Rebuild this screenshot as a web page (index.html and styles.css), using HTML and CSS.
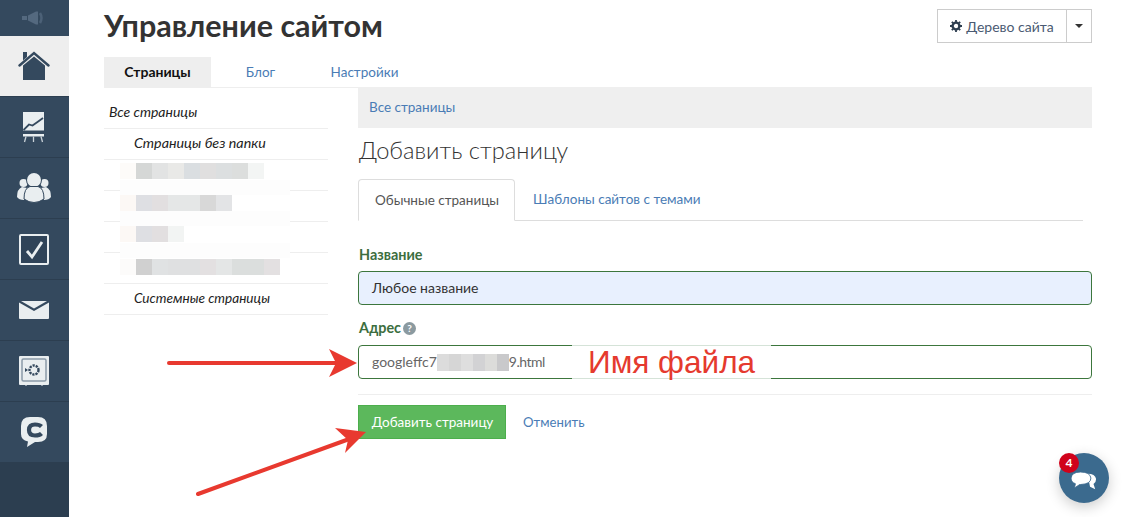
FILE: index.html
```html
<!DOCTYPE html>
<html lang="ru">
<head>
<meta charset="utf-8">
<title>Управление сайтом</title>
<link rel="stylesheet" href="styles.css">
</head>
<body>
<nav class="side">
  <div class="side-top">
    <svg width="26" height="14" viewBox="0 0 26 14"><path d="M1 5h5v4H1zM7 4.500L15 .5h2v13h-2L7 9.500z" fill="#54697f"/><path d="M19 2q3 5 0 10" stroke="#4c6177" stroke-width="2.500" fill="none"/></svg>
  </div>
  <a class="side-item active">
    <svg width="32" height="30" viewBox="0 0 32 30"><path d="M5 1h4v5l-4 3.500z" fill="#34495e"/><path d="M5 14.500 16 5.500l11 9V29H5z" fill="#34495e"/><path d="M1.500 14.500 16 2l14.500 12.500" fill="none" stroke="#34495e" stroke-width="2.400" stroke-linecap="round"/></svg>
  </a>
  <a class="side-item">
    <svg width="22" height="31" viewBox="0 0 22 31"><path d="M0 0h21v18.500H0z" fill="#e9eef0"/><path d="M.5 18 6 12.500l3.500 1 5-3.500 5.500-4" fill="none" stroke="#34495e" stroke-width="1.800"/><path d="M0 22h21v2.500H0z" fill="#e9eef0"/><path d="M3 24.500 1.500 30M10.500 24.500V30M18 24.500l1.500 5.500" stroke="#c9d2d8" stroke-width="1.300"/></svg>
  </a>
  <a class="side-item">
    <svg width="35" height="30" viewBox="0 0 35 30"><circle cx="6.500" cy="10" r="4" fill="#e9eef0"/><circle cx="27.500" cy="10" r="4" fill="#e9eef0"/><path d="M0 24q0-8 5-10l5 1-3 12Q2 27 0 24zM34 24q0-8-5-10l-5 1 3 12q5 0 7-3z" fill="#e9eef0"/><circle cx="17" cy="7" r="8" fill="#34495e"/><circle cx="17" cy="7" r="7" fill="#e9eef0"/><path d="M7 26q0-11 6-12.500h8q6 1.500 6 12.500-5 3.500-10 3.500T7 26z" fill="#e9eef0" stroke="#34495e" stroke-width="1"/></svg>
  </a>
  <a class="side-item">
    <svg width="30" height="31" viewBox="0 0 30 31"><rect x="1" y="1" width="28" height="29" rx="1" fill="#2f4358" stroke="#e9eef0" stroke-width="2"/><path d="M8 17l5 6L23 8" fill="none" stroke="#e9eef0" stroke-width="2.800"/></svg>
  </a>
  <a class="side-item">
    <svg width="30" height="18" viewBox="0 0 30 18"><path d="M0 1.500 15 10 30 1.500V17a1 1 0 0 1-1 1H1a1 1 0 0 1-1-1z" fill="#e9eef0"/><path d="M2 0h26L15 7.500z" fill="#e9eef0"/></svg>
  </a>
  <a class="side-item">
    <svg width="30" height="30" viewBox="0 0 30 30"><path d="M1 0h28a1 1 0 0 1 1 1v27a1 1 0 0 1-1 1h-5l-1 1-1-1H8l-1 1-1-1H1a1 1 0 0 1-1-1V1a1 1 0 0 1 1-1z" fill="#e9eef0"/><rect x="3" y="3" width="24" height="22" rx="1.500" fill="none" stroke="#8a9aa8" stroke-width="1.500"/><circle cx="15" cy="14" r="4.500" fill="none" stroke="#34495e" stroke-width="2.400" stroke-dasharray="2.200 1"/><path d="M6 12v4l3-2z" fill="#34495e"/></svg>
  </a>
  <a class="side-item">
    <svg width="26" height="31" viewBox="0 0 26 31"><path d="M9 0h8q9 0 9 9v8q0 8-9 8h-3l-8 5 1-5.500Q0 23 0 17V9q0-9 9-9z" fill="#e9eef0"/><path d="M20.500 9.500Q18.500 7.500 14 7.500 8 7.500 8 13t6 5.500q4.500 0 6.500-2" fill="none" stroke="#34495e" stroke-width="4.200"/></svg>
  </a>
  <div class="side-rest"></div>
</nav>

<main class="main">
  <header class="head">
    <h1 class="title">Управление сайтом</h1>
    <div class="tree">
      <button class="tree-btn">
        <svg class="gear" width="12" height="12" viewBox="0 0 12 12"><circle cx="6" cy="6" r="3.400" fill="none" stroke="#2d3e50" stroke-width="2.400"/><path d="M6 0v12M0 6h12M1.800 1.800l8.400 8.400M10.200 1.800l-8.400 8.400" stroke="#2d3e50" stroke-width="1.800" stroke-dasharray="2 8 2"/></svg>
        Дерево сайта
      </button>
      <button class="tree-caret"><span class="caret"></span></button>
    </div>
  </header>

  <div class="tabs">
    <a class="tab current">Страницы</a>
    <a class="tab">Блог</a>
    <a class="tab">Настройки</a>
  </div>

  <div class="columns">
    <aside class="tree-list">
      <div class="row">Все страницы</div>
      <div class="row sub wide">Страницы без папки</div>
      <div class="row blurred">
        <i class="c" style="background:#fdfbf9"></i><i class="c" style="background:#d5d7d6"></i><i class="c" style="background:#e2e3e3"></i><i class="c" style="background:#e9e9e7"></i><i class="c" style="background:#dadee1"></i><i class="c" style="background:#e0dfdf"></i><i class="c" style="background:#dcdfe0"></i><i class="c" style="background:#dcdedd"></i><i class="c" style="background:#f3f5f4"></i>
      </div>
      <div class="row blurred r2">
        <i class="c" style="background:#fcf8f5"></i><i class="c" style="background:#dedfe3"></i><i class="c" style="background:#e2dfe0"></i><i class="c" style="background:#e5e7e7"></i><i class="c" style="background:#e5e7e7"></i><i class="c" style="background:#d8d8d8"></i><i class="c" style="background:#e3e4e6"></i>
      </div>
      <div class="row blurred r2">
        <i class="c" style="background:#fcf8f5"></i><i class="c" style="background:#dedfe3"></i><i class="c" style="background:#e2dfe0"></i><i class="c" style="background:#f2f4f3"></i>
      </div>
      <div class="row blurred r4">
        <i class="c" style="background:#fcfbfa"></i><i class="c" style="background:#d0d0d0"></i><i class="c" style="background:#e0e2e3"></i><i class="c" style="background:#dfe0e1"></i><i class="c" style="background:#dfe0e1"></i><i class="c" style="background:#e3e0e1"></i><i class="c" style="background:#e4e6e6"></i><i class="c" style="background:#dbdedd"></i><i class="c" style="background:#dbdedd"></i><i class="c" style="background:#e3e0e1"></i>
      </div>
      <div class="row sub narrow">Системные страницы</div>
      <div class="patch p1"></div>
      <div class="patch p2"></div>
      <div class="patch p3"></div>
    </aside>

    <section class="content">
      <div class="crumb"><a>Все страницы</a></div>
      <h2 class="subtitle">Добавить страницу</h2>
      <div class="subtabs">
        <a class="subtab current">Обычные страницы</a>
        <a class="subtab">Шаблоны сайтов с темами</a>
      </div>
      <form class="form">
        <label class="label">Название</label>
        <div class="input filled">Любое название</div>
        <label class="label addr">Адрес<span class="help">?</span></label>
        <div class="input address">
          googleffc7<span class="blur"><i class="b" style="background:#dcdcdc"></i><i class="b" style="background:#d6d6d6"></i><i class="b" style="background:#dedede"></i><i class="b" style="background:#d2d2d4"></i><i class="b" style="background:#dcdcda"></i><i class="b" style="background:#c9c9cb"></i></span><span class="tail">9.html</span>
          <span class="name-over">Имя файла</span>
        </div>
        <div class="actions">
          <button type="button" class="btn-add">Добавить страницу</button>
          <a class="cancel">Отменить</a>
        </div>
      </form>
    </section>
  </div>
</main>

<svg class="arrows" width="1129" height="517" viewBox="0 0 1129 517">
  <path d="M169 363H340" stroke="#e8392f" stroke-width="4" stroke-linecap="round"/>
  <path d="M329 349 357 363 329 377 336 363z" fill="#e8392f"/>
  <path d="M198 494 352 438" stroke="#e8392f" stroke-width="4" stroke-linecap="round"/>
  <path d="M335 428 366 432 345 453 348 440z" fill="#e8392f"/>
</svg>

<div class="chat">
  <svg width="26" height="19" viewBox="0 0 30 22"><path d="M19 2q9 0 10 6 0 4-3 6l2 6-6-3z" fill="#fff"/><path d="M11 0q11 0 12 7 0 7-12 7.500h-1l-6 4 1-5Q0 12 0 7 1 0 11 0z" fill="#fff" stroke="#3b6a8e" stroke-width="1"/></svg>
  <span class="badge">4</span>
</div>
</body>
</html>
```
FILE: styles.css
```css
* { box-sizing: border-box; }
html, body { margin: 0; height: 517px; overflow: hidden; }
body {
  display: flex;
  position: relative;
  background: #fff;
  font-family: "Lato", "Open Sans", "Liberation Sans", sans-serif;
  font-size: 13.5px;
  color: #333;
}
a { color: #4a7cb5; text-decoration: none; }

.side { width: 69px; flex: none; height: 517px; display: flex; flex-direction: column; background: #34495e; }
.side-top { height: 36px; display: flex; align-items: center; justify-content: center; padding-right: 1px; }
.side-item { height: 61px; display: flex; align-items: center; justify-content: center; border-top: 1px solid #2c3e50; flex: none; padding-right: 1px; }
.side-item.active { height: 60px; background: #eeeeee; border-top: 0; }
.side-rest { flex: 1; background: #2c3e50; }

.main { flex: 1; padding: 0 37px 0 35px; min-width: 0; }
.head { height: 57px; display: flex; justify-content: space-between; align-items: flex-start; }
.title { margin: 8px 0 0; font-size: 30.5px; line-height: 34px; font-weight: 700; color: #333; }
.tree { display: flex; margin-top: 9px; height: 34px; }
.tree-btn, .tree-caret {
  background: #fff; border: 1px solid #ccc; font: inherit; font-size: 14px; color: #4a5a72; padding: 0;
}
.tree-btn { width: 130px; display: flex; align-items: center; justify-content: center; gap: 4px; }
.tree-caret { width: 26px; margin-left: -1px; display: flex; align-items: center; justify-content: center; }
.caret { border: 4px solid transparent; border-top-color: #333; border-bottom: 0; }

.tabs { display: flex; height: 31px; border-bottom: 1px solid #eee; }
.tab { height: 30px; line-height: 30px; width: 107px; text-align: center; }
.tab.current { background: #eee; color: #111; font-weight: 700; font-size: 14px; }
.tab:nth-child(2) { width: 99px; }
.tab:nth-child(3) { width: 109px; }

.columns { display: flex; gap: 30px; }
.tree-list { width: 224px; position: relative; flex: none; padding-top: 11px; margin-top: -1px; }
.row { height: 31px; border-bottom: 1px solid #eee; padding-left: 5px; font-style: italic; color: #222; font-size: 14px; line-height: 28px; }
.row.sub { padding-left: 30px; }
.row.wide { font-size: 14.3px; }
.row.narrow { font-size: 13.6px; }
.row.blurred { padding: 3px 0 0 16px; display: flex; align-items: flex-start; }
.row.r2 { padding-top: 4px; }
.row.r4 { padding-top: 6px; }
.c { display: block; width: 16px; height: 16px; flex: none; }
.patch { position: absolute; left: 16px; width: 170px; height: 15px; background: #fdfdfd; }
.p1 { top: 93px; }
.p2 { top: 124px; }
.p3 { top: 156px; }

.content { flex: 1; min-width: 0; margin-top: -1px; }
.crumb { height: 41px; background: #efefef; padding-left: 11px; line-height: 40px; }
.subtitle { margin: 7px 0 0 1px; font-size: 23.7px; line-height: 30px; font-weight: 300; color: #333; }
.subtabs { display: flex; margin-top: 14px; height: 42px; border-bottom: 1px solid #ddd; margin-right: 9px; }
.subtab { height: 41px; line-height: 40px; padding: 0 18px; }
.subtab.current { color: #555; height: 42px; background: #fff; border: 1px solid #ddd; border-bottom-color: #fff; border-radius: 4px 4px 0 0; padding: 0 15px 0 16px; }
.form { padding-top: 24px; }
.label { display: block; font-weight: 700; color: #3c6e3e; line-height: 20px; height: 20px; font-size: 14.4px; padding-left: 1px; }
.input { height: 34px; margin-top: 6px; border: 1px solid #3c763d; border-radius: 4px; padding-left: 13px; line-height: 32px; font-size: 14px; color: #444; display: block; position: relative; white-space: nowrap; }
.input.filled { background: #e8f0fe; color: #333; }
.addr { margin-top: 13px; }
.input.address { color: #666; margin-top: 7px; }
.help { display: inline-block; width: 13px; height: 13px; margin-left: 2px; border-radius: 50%; background: #8b9aa0; color: #fff; font-size: 10px; line-height: 13px; text-align: center; vertical-align: 1px; font-weight: 700; }
.blur { display: inline-flex; vertical-align: top; height: 17px; margin-top: 8px; }
.b { display: block; width: 12px; height: 17px; }
.tail { letter-spacing: -.5px; }
.name-over {
  position: absolute; left: 213px; top: -1px; width: 199px; height: 34px;
  background: #fff; border-top: 1px solid #d5e3d8; border-bottom: 1px solid #d5e3d8;
  color: #e53a2e; font-family: "Liberation Sans", Arial, sans-serif; font-size: 31.5px; line-height: 32px; padding-left: 16px;
}
.actions { margin-top: 15px; border-top: 1px solid #eee; padding-top: 10px; display: flex; align-items: center; gap: 17px; }
.btn-add { width: 148px; height: 34px; background: #5cb85c; border: 1px solid #4cae4c; color: #fff; font: inherit; padding: 0 0 0 1px; }
.cancel { font-size: 13.2px; }

.arrows { position: absolute; left: 0; top: 0; pointer-events: none; }
.chat { position: absolute; left: 1059px; top: 453px; width: 50px; height: 50px; border-radius: 50%; background: #3b6a8e; box-shadow: 0 4px 14px rgba(0,0,0,.2); display: flex; align-items: center; justify-content: center; padding: 7px 0 0 0; }
.badge { position: absolute; left: 0; top: 0; width: 20px; height: 20px; border-radius: 50%; background: #d0021b; color: #fff; font-size: 12px; font-weight: 700; line-height: 20px; text-align: center; }
```
